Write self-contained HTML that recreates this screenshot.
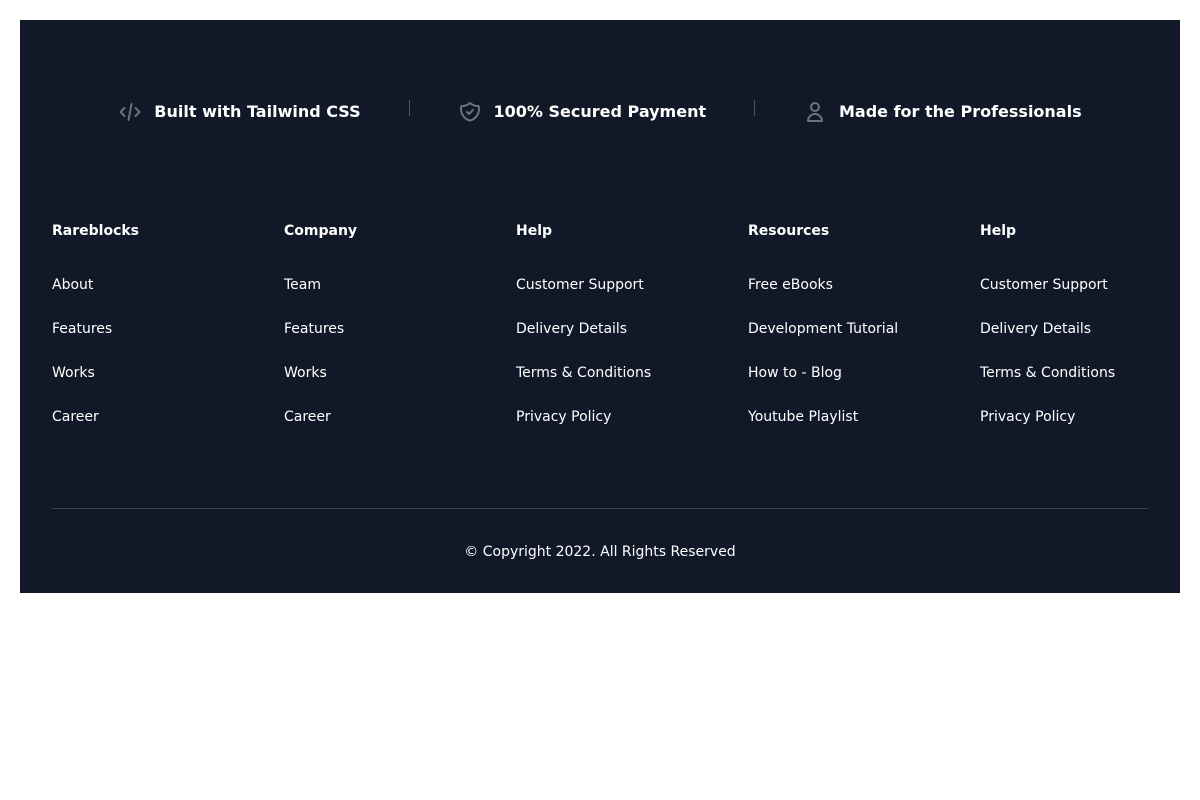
<!DOCTYPE html>
<html lang="en">
<head>
<meta charset="utf-8">
<title>Footer</title>
<style>
html,body{margin:0;padding:0;background:#fff;width:1200px;height:800px;overflow:hidden}
body{font-family:"DejaVu Sans","Liberation Sans",sans-serif;position:relative}
#f{position:absolute;left:20px;top:20px;width:1160px;height:573px;background:#111827}
.a{position:absolute;white-space:nowrap;color:#fff;font-size:14px;line-height:20px}
.b{font-weight:700}
.t{font-size:16px;line-height:24px;font-weight:700;top:100px}
.d{position:absolute;width:1px;height:16px;top:100px;background:#4b5563}
svg{position:absolute;fill:none;stroke:#6b7280;stroke-width:2;stroke-linecap:round;stroke-linejoin:round}
#hr{position:absolute;left:52px;top:508px;width:1096px;height:1px;background:#374151}
</style>
</head>
<body>
<div id="f"></div>
<svg style="left:118px;top:100px" width="24" height="24" viewBox="0 0 24 24"><path d="M10.500 20l3-16M17.500 8l4 4-4 4M6.500 16l-4-4 4-4"/></svg>
<div class="a t" style="left:154.300px">Built with Tailwind CSS</div>
<div class="d" style="left:409px"></div>
<svg style="left:458px;top:100px" width="24" height="24" viewBox="0 0 24 24"><path d="M9 12l2 2 4-4m5.618-4.016A11.955 11.955 0 0112 2.944a11.955 11.955 0 01-8.618 3.040A12.020 12.020 0 003 9c0 5.591 3.824 10.290 9 11.622 5.176-1.332 9-6.030 9-11.622 0-1.042-.133-2.052-.382-3.016z"/></svg>
<div class="a t" style="left:493.500px">100% Secured Payment</div>
<div class="d" style="left:754px"></div>
<svg style="left:803px;top:100px" width="24" height="24" viewBox="0 0 24 24"><path d="M16 7a4 4 0 11-8 0 4 4 0 018 0zM12 14a7 7 0 00-7 7h14a7 7 0 00-7-7z"/></svg>
<div class="a t" style="left:839px">Made for the Professionals</div>

<div class="a b" style="left:52px;top:221px">Rareblocks</div>
<div class="a" style="left:52px;top:275px">About</div>
<div class="a" style="left:52px;top:319px">Features</div>
<div class="a" style="left:52px;top:363px">Works</div>
<div class="a" style="left:52px;top:407px">Career</div>

<div class="a b" style="left:284px;top:221px">Company</div>
<div class="a" style="left:284px;top:275px">Team</div>
<div class="a" style="left:284px;top:319px">Features</div>
<div class="a" style="left:284px;top:363px">Works</div>
<div class="a" style="left:284px;top:407px">Career</div>

<div class="a b" style="left:516px;top:221px">Help</div>
<div class="a" style="left:516px;top:275px">Customer Support</div>
<div class="a" style="left:516px;top:319px">Delivery Details</div>
<div class="a" style="left:516px;top:363px">Terms &amp; Conditions</div>
<div class="a" style="left:516px;top:407px">Privacy Policy</div>

<div class="a b" style="left:748px;top:221px">Resources</div>
<div class="a" style="left:748px;top:275px">Free eBooks</div>
<div class="a" style="left:748px;top:319px">Development Tutorial</div>
<div class="a" style="left:748px;top:363px">How to - Blog</div>
<div class="a" style="left:748px;top:407px">Youtube Playlist</div>

<div class="a b" style="left:980px;top:221px">Help</div>
<div class="a" style="left:980px;top:275px">Customer Support</div>
<div class="a" style="left:980px;top:319px">Delivery Details</div>
<div class="a" style="left:980px;top:363px">Terms &amp; Conditions</div>
<div class="a" style="left:980px;top:407px">Privacy Policy</div>

<div id="hr"></div>
<div class="a" style="left:0;width:1200px;top:542px;text-align:center">© Copyright 2022. All Rights Reserved</div>
</body>
</html>
